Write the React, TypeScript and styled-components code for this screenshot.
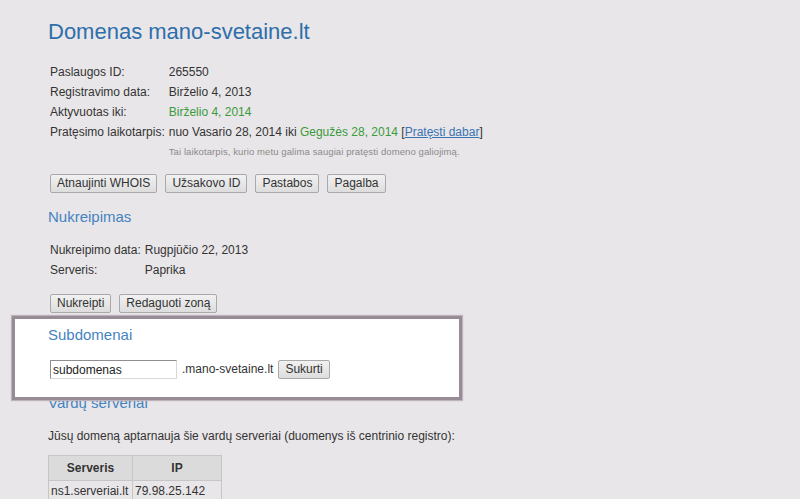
import styled, { createGlobalStyle } from "styled-components";

const GlobalStyle = createGlobalStyle`
  html, body {
    margin: 0;
    padding: 0;
    background: #e8e6e8;
    overflow: hidden;
  }
  body {
    font-family: "Liberation Sans", Arial, sans-serif;
    font-size: 12px;
    color: #333;
  }
`;

const Page = styled.div`
  padding: 19px 0 0 48px;
  display: flex;
  flex-direction: column;
  align-items: flex-start;
`;

const Title = styled.h1`
  margin: 0;
  font-size: 22px;
  line-height: 26px;
  font-weight: normal;
  color: #2e6eab;
`;

const Heading = styled.h2<{ $top?: number }>`
  margin: ${(p) => p.$top ?? 0}px 0 0;
  font-size: 15px;
  line-height: 20px;
  font-weight: normal;
  color: #4583c1;
`;

const InfoTable = styled.table<{ $top: number }>`
  margin-top: ${(p) => p.$top}px;
  border-collapse: collapse;

  td {
    padding: 0 2px;
    height: 20px;
    line-height: 20px;
    white-space: nowrap;
    vertical-align: middle;
  }
`;

const Green = styled.span`
  color: #3a9b3a;
`;

const Link = styled.a`
  color: #3a74b2;
  text-decoration: underline;
`;

const Note = styled.td`
  font-size: 9.5px;
  letter-spacing: 0.1px;
  color: #8a8a8a;
`;

const ButtonRow = styled.div<{ $top: number }>`
  display: flex;
  gap: 8px;
  margin: ${(p) => p.$top}px 0 0 2px;
`;

const Button = styled.button`
  font-family: inherit;
  font-size: 12px;
  line-height: 15px;
  height: 19px;
  padding: 0 6px;
  color: #333;
  background: linear-gradient(#f1f1f1, #dddddd);
  border: 1px solid #a9a9a9;
  border-radius: 2px;
  cursor: pointer;
`;

/* highlighted section, drawn over the heading that follows it */
const Highlight = styled.section`
  position: relative;
  z-index: 1;
  box-sizing: border-box;
  width: 450px;
  margin: 3px 0 -7px -36px;
  padding: 6px 0 18px 33px;
  background: #fff;
  border: 3px solid #978b96;
  box-shadow: 0 0 1px 1px #bdb3bb;
  display: flex;
  flex-direction: column;
  align-items: flex-start;
`;

const FormRow = styled.div`
  display: flex;
  align-items: center;
  gap: 5px;
  margin: 15px 0 0 2px;
`;

const TextInput = styled.input`
  box-sizing: border-box;
  width: 127px;
  height: 19px;
  padding: 0 2px;
  font-family: inherit;
  font-size: 12px;
  color: #222;
  background: #fff;
  border: 1px solid;
  border-color: #8f8f8f #d8d8d8 #d8d8d8 #8f8f8f;
  outline: none;
`;

const Suffix = styled.span`
  margin-top: -2px;
`;

const Paragraph = styled.p`
  margin: 13px 0 0;
  line-height: 20px;
`;

const ServerTable = styled.table`
  margin-top: 9px;
  border-collapse: collapse;
  border: 1px solid #c6c6c6;

  th,
  td {
    border: 1px solid #c6c6c6;
    white-space: nowrap;
  }
  th {
    height: 24px;
    padding: 0;
    background: #dcdbdc;
    font-weight: bold;
    text-align: center;
  }
  td {
    height: 20px;
    padding: 0 2px;
    text-align: left;
  }
`;

const info = [
  { label: "Paslaugos ID:", value: "265550" },
  { label: "Registravimo data:", value: "Birželio 4, 2013" },
  { label: "Aktyvuotas iki:", value: <Green>Birželio 4, 2014</Green> },
];

const App = () => {
  return (
    <>
      <GlobalStyle />
      <Page>
        <Title>Domenas mano-svetaine.lt</Title>

        <InfoTable $top={17}>
          <tbody>
            {info.map((row) => (
              <tr key={row.label}>
                <td>{row.label}</td>
                <td>{row.value}</td>
              </tr>
            ))}
            <tr>
              <td>Pratęsimo laikotarpis:</td>
              <td>
                nuo Vasario 28, 2014 iki <Green>Gegužės 28, 2014</Green> [
                <Link href="#">Pratęsti dabar</Link>]
              </td>
            </tr>
            <tr>
              <td />
              <Note>Tai laikotarpis, kurio metu galima saugiai pratęsti domeno galiojimą.</Note>
            </tr>
          </tbody>
        </InfoTable>

        <ButtonRow $top={12}>
          <Button>Atnaujinti WHOIS</Button>
          <Button>Užsakovo ID</Button>
          <Button>Pastabos</Button>
          <Button>Pagalba</Button>
        </ButtonRow>

        <Heading $top={14}>Nukreipimas</Heading>

        <InfoTable $top={13}>
          <tbody>
            <tr>
              <td>Nukreipimo data:</td>
              <td>Rugpjūčio 22, 2013</td>
            </tr>
            <tr>
              <td>Serveris:</td>
              <td>Paprika</td>
            </tr>
          </tbody>
        </InfoTable>

        <ButtonRow $top={14}>
          <Button>Nukreipti</Button>
          <Button>Redaguoti zoną</Button>
        </ButtonRow>

        <Highlight>
          <Heading>Subdomenai</Heading>
          <FormRow>
            <TextInput defaultValue="subdomenas" />
            <Suffix>.mano-svetaine.lt</Suffix>
            <Button>Sukurti</Button>
          </FormRow>
        </Highlight>

        <Heading>Vardų serveriai</Heading>

        <Paragraph>
          Jūsų domeną aptarnauja šie vardų serveriai (duomenys iš centrinio registro):
        </Paragraph>

        <ServerTable>
          <thead>
            <tr>
              <th style={{ width: 83 }}>Serveris</th>
              <th style={{ width: 88 }}>IP</th>
            </tr>
          </thead>
          <tbody>
            <tr>
              <td>ns1.serveriai.lt</td>
              <td>79.98.25.142</td>
            </tr>
          </tbody>
        </ServerTable>
      </Page>
    </>
  );
};

export default App;
